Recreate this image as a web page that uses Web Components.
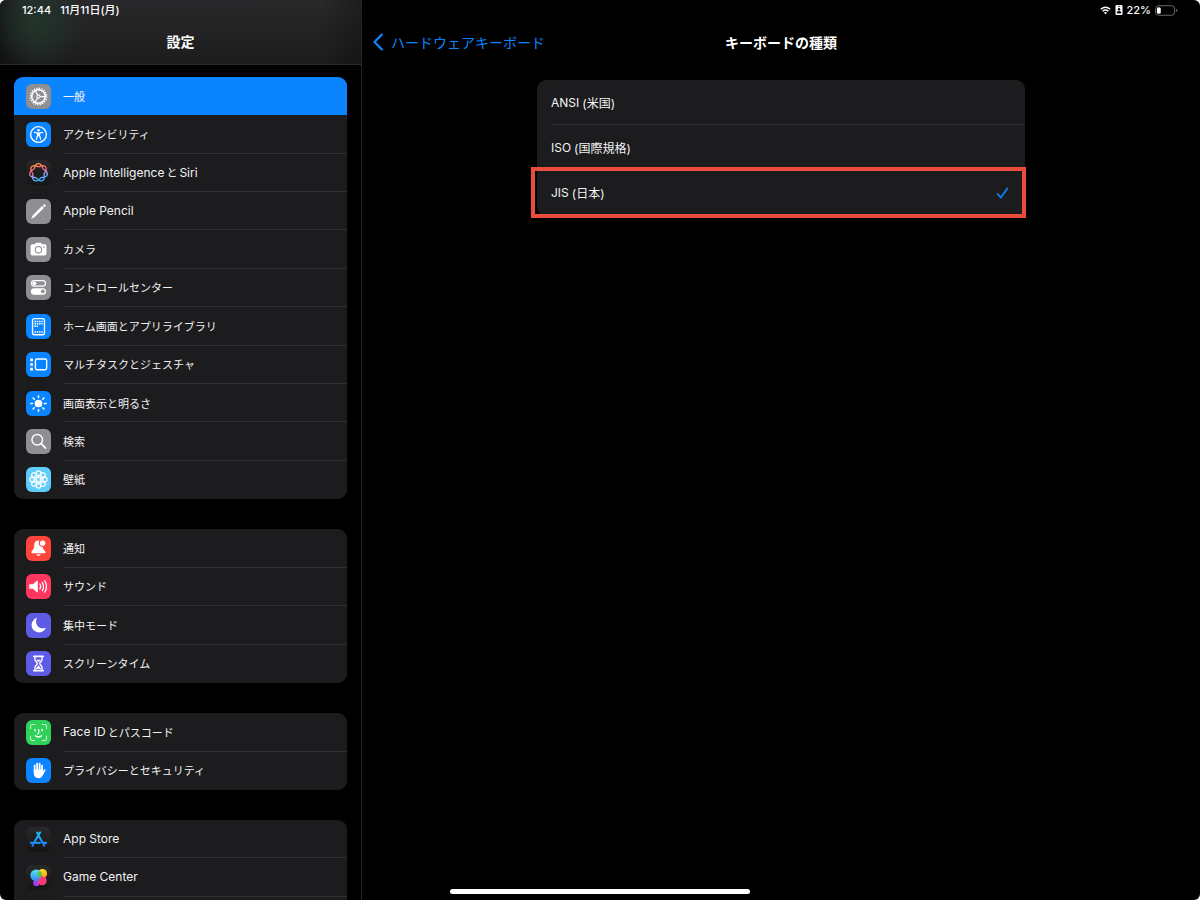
<!DOCTYPE html>
<html lang="ja">
<head>
<meta charset="utf-8">
<meta name="viewport" content="width=device-width, initial-scale=1">
<title>キーボードの種類</title>
<style>
  html {
    background: #fff;
  }

  body {
    margin: 0;
    color: #fff;
    font-family: Inter, "Noto Sans CJK JP", sans-serif;
    font-size: 12px;
  }
</style>
</head>
<body>
<settings-app>
  <settings-sidebar slot="sidebar">
    <settings-group>
      <settings-row icon="general" selected>一般</settings-row>
      <settings-row icon="accessibility">アクセシビリティ</settings-row>
      <settings-row icon="intelligence"><b>Apple Intelligence</b>と<b>Siri</b></settings-row>
      <settings-row icon="pencil"><b>Apple Pencil</b></settings-row>
      <settings-row icon="camera">カメラ</settings-row>
      <settings-row icon="control">コントロールセンター</settings-row>
      <settings-row icon="home">ホーム画面とアプリライブラリ</settings-row>
      <settings-row icon="multitask">マルチタスクとジェスチャ</settings-row>
      <settings-row icon="display">画面表示と明るさ</settings-row>
      <settings-row icon="search">検索</settings-row>
      <settings-row icon="wallpaper">壁紙</settings-row>
    </settings-group>
    <settings-group>
      <settings-row icon="notice">通知</settings-row>
      <settings-row icon="sound">サウンド</settings-row>
      <settings-row icon="focus">集中モード</settings-row>
      <settings-row icon="screentime">スクリーンタイム</settings-row>
    </settings-group>
    <settings-group>
      <settings-row icon="faceid"><b>Face ID</b>とパスコード</settings-row>
      <settings-row icon="privacy">プライバシーとセキュリティ</settings-row>
    </settings-group>
    <settings-group>
      <settings-row icon="appstore"><b>App Store</b></settings-row>
      <settings-row icon="gamecenter"><b>Game Center</b></settings-row>
      <settings-row></settings-row>
    </settings-group>
  </settings-sidebar>
  <settings-detail slot="detail">
    <keyboard-types></keyboard-types>
  </settings-detail>
</settings-app>

<script>
// closed curve that crosses itself around a ring
function ringPath(cx, cy, radius, wave) {
  let d = "";
  for (let i = 0; i <= 168; i++) {
    const a = i / 168 * Math.PI * 4;
    const r = radius + wave * Math.cos(3.5 * a);
    d += (i ? "L" : "M") + (cx + r * Math.sin(a)).toFixed(2) + " " + (cy - r * Math.cos(a)).toFixed(2);
  }
  return d + "Z";
}

function around(count, draw) {
  return Array.from({length: count}, (_, i) => `<g transform="rotate(${i * 360 / count} 13 13)">${draw}</g>`).join("");
}

const gray = "#8e8e93";
const blue = "#0a84ff";
const dark = "linear-gradient(#29292b, #151516)";

const icons = {
  general: [gray, `
    <g fill="none" stroke="#fff">
      <circle cx="13" cy="13" r="7" stroke-width="1.6"/>
      <circle cx="13" cy="13" r="8.5" stroke-width="1.5" stroke-dasharray="1.4 1.27"/>
      <circle cx="13" cy="13" r="1.7" stroke-width="1.1"/>
      <path d="M14.7 13H20M12.1 11.5 9.5 7M12.1 14.5 9.5 19" stroke-width="1.3"/>
    </g>`],
  accessibility: [blue, `
    <circle cx="13" cy="13" r="8.2" fill="none" stroke="#fff" stroke-width="1.4"/>
    <circle cx="13" cy="8.5" r="1.3" fill="#fff"/>
    <path d="M8.7 10.8 12 11.5V14L10.7 18M17.3 10.8 14 11.5V14L15.3 18M12 11.6H14M12.3 14H13.7" fill="none" stroke="#fff" stroke-width="1.3" stroke-linecap="round" stroke-linejoin="round"/>
    <path d="M11.8 11.2H14.2V14.8H11.8Z" fill="#fff"/>`],
  intelligence: [dark, `
    <defs><linearGradient id="ai" x1="0.2" y1="0" x2="0.5" y2="1">
      <stop offset="0" stop-color="#ff9f2e"/><stop offset="0.45" stop-color="#f5608f"/>
      <stop offset="0.7" stop-color="#a9a0f5"/><stop offset="1" stop-color="#28b4ff"/>
    </linearGradient></defs>
    <path d="${ringPath(13, 13, 7.7, 1.6)}" fill="none" stroke="url(#ai)" stroke-width="1.4"/>`],
  pencil: [gray, `
    <path d="M5.4 20.6 6.9 17.2 16.7 7.4 18.6 9.3 8.8 19.1ZM17.4 6.7 18.2 5.9A1.2 1.2 0 0 1 20.1 7.8L19.3 8.6Z" fill="#fff"/>`],
  camera: [gray, `
    <path d="M6.5 7.5H9.3L10.4 6H15.6L16.7 7.5H19.5A1.8 1.8 0 0 1 21.3 9.3V17.4A1.8 1.8 0 0 1 19.5 19.2H6.5A1.8 1.8 0 0 1 4.7 17.4V9.3A1.8 1.8 0 0 1 6.5 7.5Z" fill="#fff"/>
    <circle cx="13" cy="13.2" r="3.3" fill="none" stroke="${gray}" stroke-width="1.1"/>
    <circle cx="18.5" cy="10.4" r=".8" fill="${gray}"/>`],
  control: [gray, `
    <rect x="5.7" y="5.8" width="14.6" height="5.8" rx="2.9" fill="none" stroke="#fff" stroke-width="1.2"/>
    <circle cx="8.7" cy="8.7" r="2" fill="#fff"/>
    <rect x="5.1" y="13.7" width="15.8" height="6.8" rx="3.4" fill="#fff"/>
    <circle cx="17.5" cy="17.1" r="1.9" fill="${gray}"/>`],
  home: [blue, `
    <rect x="6.8" y="4.8" width="12.4" height="16.8" rx="2" fill="none" stroke="#fff" stroke-width="1.4"/>
    <g fill="none" stroke="#fff" stroke-width="1.6" stroke-dasharray="1.6 .8">
      <path d="M8.8 7.8H17.4M8.8 10.2H17.4M8.8 12.6H12.4M8.8 18.8H17.4"/>
    </g>`],
  multitask: [blue, `
    <rect x="9.8" y="7.3" width="11.7" height="11.2" rx="1.8" fill="none" stroke="#fff" stroke-width="1.4"/>
    <path d="M4.4 6.8H7.2V9.6H4.4ZM4.4 11.6H7.2V14.4H4.4ZM4.4 16.4H7.2V19.2H4.4Z" fill="#fff"/>`],
  display: [blue, `
    <circle cx="13" cy="13" r="4" fill="#fff"/>
    ${around(8, '<path d="M13 5V6.8" stroke="#fff" stroke-width="1.6" stroke-linecap="round"/>')}`],
  search: [gray, `
    <circle cx="11.7" cy="11.2" r="5.5" fill="none" stroke="#fff" stroke-width="1.5"/>
    <path d="M15.8 15.3 20.3 19.8" stroke="#fff" stroke-width="1.8" stroke-linecap="round"/>`],
  wallpaper: ["#5fcdfb", `
    <g fill="none" stroke="#fff" stroke-width="1.2">
      ${around(8, '<circle cx="13" cy="6.4" r="2.4"/><path d="M13 8.8V10.4"/>')}
      <circle cx="13" cy="13" r="2.6"/>
    </g>
    <circle cx="13" cy="13" r="6.4" fill="#fff" opacity=".25"/>`],
  notice: ["#ff453a", `
    <path d="M12.8 4.8C9.6 5 8.6 7.2 8.6 10.2 8.6 14 5.6 15.2 5.6 17.2 5.6 17.8 6 18 6.6 18H19.4C20 18 20.4 17.8 20.4 17.2 20.4 15.2 17.6 14.4 17.4 11.4 14.6 11.4 12.2 8.4 13.8 4.9Z" fill="#fff"/>
    <path d="M10.8 19H15.2C14.8 21.4 11.2 21.4 10.8 19Z" fill="#fff"/>
    <circle cx="17.3" cy="7.6" r="2.8" fill="#fff"/>`],
  sound: ["#ff375f", `
    <path d="M4 10.6H7.2L11.4 7Q12.3 6.5 12.3 7.5V18.5Q12.3 19.5 11.4 19L7.2 15.4H4Q3.4 15.4 3.4 14.8V11.2Q3.4 10.6 4 10.6Z" fill="#fff"/>
    <path d="M14.5 10.4Q16 13 14.5 15.6M17 8.7Q19.5 13 17 17.3M19.5 7Q23 13 19.5 19" fill="none" stroke="#fff" stroke-width="1.3" stroke-linecap="round"/>`],
  focus: ["#5e5ce6", `
    <path d="M11.2 5.4C8.6 11 13 17.5 19.8 15.6 20.3 15.5 20.6 15.8 20.3 16.3 17.3 21.5 9.4 21.4 6.7 16.2 4.6 12 6.6 7.2 10.5 5.1 11 4.9 11.4 5 11.2 5.4Z" fill="#fff"/>`],
  screentime: ["#5e5ce6", `
    <path d="M8.2 5.5H17.8M8.2 20.5H17.8" stroke="#fff" stroke-width="1.8" stroke-linecap="round"/>
    <path d="M9.3 6V8.5C9.3 11 11.8 11.5 11.8 13S9.3 15 9.3 17.5V20M16.7 6V8.5C16.7 11 14.2 11.5 14.2 13S16.7 15 16.7 17.5V20" fill="none" stroke="#fff" stroke-width="1.4"/>
    <path d="M10.4 9H15.6L13 11.8ZM13 14.8 16 18.8H10Z" fill="#fff"/>`],
  faceid: ["#30d158", `
    <g fill="none" stroke="#fff" stroke-linecap="round">
      <path d="M4.7 9V6.7A2 2 0 0 1 6.7 4.7H9M17 4.7H19.3A2 2 0 0 1 21.3 6.7V9M21.3 17V19.3A2 2 0 0 1 19.3 21.3H17M9 21.3H6.7A2 2 0 0 1 4.7 19.3V17" stroke-width="1.1" opacity=".75"/>
      <path d="M9.3 9.8V11.2M16.7 9.8V11.2M13.2 10V13.6Q13.2 14.3 12.3 14.3M9.8 16.4Q13 19 16.2 16.4" stroke-width="1.4"/>
    </g>`],
  privacy: [blue, `
    <g fill="none" stroke="#fff" stroke-width="1.9" stroke-linecap="round">
      <path d="M9 7.8V14M11.6 5.8V14M14.2 6V14M16.7 8V15M19.4 12.6 17 17"/>
    </g>
    <path d="M8.1 12H17.6L18.2 16.4C16.8 19.8 15.4 21 13 21 9.8 21 8.1 18.8 8.1 15.4Z" fill="#fff"/>`],
  appstore: [dark, `
    <defs><linearGradient id="as" gradientUnits="userSpaceOnUse" x1="0" y1="5" x2="0" y2="21">
      <stop offset="0" stop-color="#1dc3fb"/><stop offset="1" stop-color="#1d74f2"/>
    </linearGradient></defs>
    <path d="M11.6 5.7 13 8.1M14.6 5.7 8.3 16.4M13.3 9.4 19.1 19.4M5 16.5H14.5M17.7 16.5H21M7.5 18.4 6.8 19.6" fill="none" stroke="url(#as)" stroke-width="2.1" stroke-linecap="round"/>`],
  gamecenter: [dark, `
    <defs>
      <linearGradient id="g1" x1="0" y1="0" x2="0" y2="1"><stop offset="0" stop-color="#5ce0ee"/><stop offset="1" stop-color="#2f86f7"/></linearGradient>
      <linearGradient id="g2" x1="0" y1="0" x2="0" y2="1"><stop offset="0" stop-color="#ffe11f"/><stop offset="1" stop-color="#ff9d0c"/></linearGradient>
    </defs>
    <circle cx="10.8" cy="18.6" r="3.3" fill="#a63cf2"/>
    <circle cx="17" cy="9" r="4.9" fill="url(#g2)"/>
    <circle cx="10.5" cy="10.8" r="6" fill="url(#g1)"/>
    <path d="M12.4 7.5A4.9 4.9 0 0 0 15.8 13.7 6 6 0 0 0 14.5 6.3Z" fill="#58c83a"/>
    <circle cx="16.8" cy="16.4" r="4.7" fill="#fb3a77"/>
    <path d="M12.4 16.4A4.7 4.7 0 0 1 16 11.8 6 6 0 0 1 12.4 16.4Z" fill="#8b70e0"/>`]
};

class SettingsApp extends HTMLElement {
  constructor() {
    super();
    this.attachShadow({mode: "open"}).innerHTML = `
      <style>
        :host {
          display: grid;
          grid-template-columns: 362px 1fr;
          height: 100vh;
          overflow: hidden;
          position: relative;
          background: #000;
          border-radius: 6px;
        }

        .home-bar {
          position: absolute;
          bottom: 6px;
          left: 0;
          right: 0;
          width: 25%;
          height: 5px;
          margin: 0 auto;
          border-radius: 3px;
          background: #fff;
        }
      </style>
      <slot name="sidebar"></slot>
      <slot name="detail"></slot>
      <div class="home-bar"></div>`;
  }
}

class SettingsSidebar extends HTMLElement {
  constructor() {
    super();
    this.attachShadow({mode: "open"}).innerHTML = `
      <style>
        :host {
          display: flex;
          flex-direction: column;
          min-height: 0;
          overflow: hidden;
          border-right: 1px solid #262628;
        }

        header {
          flex: none;
          background:
            radial-gradient(circle at 38px 22px, #20352a, transparent 48px),
            linear-gradient(90deg, #0006, transparent 30px, transparent 320px, #0004),
            linear-gradient(#29292b, #1c1c1d);
          border-bottom: 1px solid #2a2a2c;
        }

        .status {
          display: flex;
          gap: 9px;
          padding: 0 22px;
          font-size: 11px;
          font-weight: 500;
          line-height: 20px;
        }

        h1 {
          margin: 0;
          font-size: 14px;
          line-height: 44px;
          text-align: center;
        }

        nav {
          display: flex;
          flex-direction: column;
          gap: 30px;
          padding: 12px 14px 0;
        }
      </style>
      <header>
        <div class="status"><span>12:44</span><span>11月11日(月)</span></div>
        <h1>設定</h1>
      </header>
      <nav aria-label="設定"><slot></slot></nav>`;
  }
}

class SettingsGroup extends HTMLElement {
  constructor() {
    super();
    this.attachShadow({mode: "open"}).innerHTML = `
      <style>
        :host {
          display: grid;
          grid-auto-rows: 1fr;
          flex: none;
          overflow: hidden;
          border-radius: 9px;
          background: #1c1c1e;
        }

        :host(:first-child) {
          min-height: 422px;
        }

        :host(:nth-child(2)) {
          min-height: 154px;
        }

        :host(:nth-child(3)) {
          min-height: 77px;
        }

        :host(:last-child) {
          min-height: 115px;
        }
      </style>
      <slot></slot>`;
  }
}

class AppIcon extends HTMLElement {
  connectedCallback() {
    const [color, art] = icons[this.getAttribute("name")];
    this.attachShadow({mode: "open"}).innerHTML = `
      <style>
        :host {
          display: block;
          flex: none;
          width: 25px;
          height: 25px;
          border-radius: 6px;
          background: ${color};
        }

        svg {
          display: block;
        }
      </style>
      <svg width="25" height="25" viewBox="0 0 26 26" aria-hidden="true">${art}</svg>`;
  }
}

class SettingsRow extends HTMLElement {
  connectedCallback() {
    const icon = this.getAttribute("icon");
    this.attachShadow({mode: "open"}).innerHTML = `
      <style>
        :host {
          display: grid;
          min-height: 38px;
        }

        :host([selected]) {
          background: #0a84ff;
        }

        a {
          display: flex;
          align-items: center;
          gap: 12px;
          padding-left: 12px;
          color: #f2f2f3;
          text-decoration: none;
        }

        .label {
          flex: 1;
          align-self: stretch;
          display: flex;
          align-items: center;
          gap: 2px;
          box-sizing: border-box;
          border-bottom: 1px solid #303032;
          font-size: 11px;
        }

        :host(:last-child) .label,
        :host([selected]) .label {
          border-color: transparent;
        }

        ::slotted(b) {
          font-size: 12px;
          font-weight: 400;
        }
      </style>
      ${icon ? `<a href="#${icon}"><app-icon name="${icon}"></app-icon><span class="label"><slot></slot></span></a>` : ""}`;
  }
}

class SettingsDetail extends HTMLElement {
  constructor() {
    super();
    this.attachShadow({mode: "open"}).innerHTML = `
      <style>
        :host {
          display: block;
          min-width: 0;
        }

        .status {
          display: flex;
          justify-content: flex-end;
          align-items: center;
          gap: 4px;
          height: 20px;
          padding-right: 22px;
          font-size: 11px;
          font-weight: 500;
        }

        header {
          display: grid;
          grid-template-columns: 1fr auto 1fr;
          align-items: center;
          height: 44px;
          padding: 0 11px;
        }

        a {
          display: flex;
          align-items: center;
          gap: 8px;
          color: #0a84ff;
          font-size: 14px;
          text-decoration: none;
        }

        h2 {
          margin: 0;
          font-size: 14px;
        }

        main {
          padding: 16px 20px 0;
        }
      </style>
      <div class="status">
        <svg width="11" height="9" viewBox="0 0 12 10" fill="none" stroke="#fff" stroke-width="1.6" aria-hidden="true">
          <path d="M.8 3.6Q6-.9 11.2 3.6M2.8 5.8Q6 3 9.2 5.8"/>
          <path d="M6 9.4 4.2 7.3Q6 5.9 7.8 7.3Z" fill="#fff" stroke="none"/>
        </svg>
        <svg width="8" height="10" viewBox="0 0 8 10" aria-hidden="true">
          <rect x=".5" width="7" height="10" rx="1.2" fill="#fff"/>
          <path d="M2.8 1.4H5.2M2 8Q2 6.2 4 6.2T6 8Z" fill="#000" stroke="#000" stroke-width=".7"/>
          <circle cx="4" cy="4.2" r="1.2" fill="#000"/>
        </svg>
        <span>22%</span>
        <svg width="23" height="11" viewBox="0 0 24 11" aria-hidden="true">
          <rect x=".5" y=".5" width="20" height="10" rx="3.4" fill="none" stroke="#6c6c6e"/>
          <path d="M22 4V7Q23.4 6.6 23.4 5.5T22 4Z" fill="#6c6c6e"/>
          <rect x="2" y="2" width="4" height="7" rx="1.8" fill="#fff"/>
        </svg>
      </div>
      <header>
        <a href="#hardware-keyboard">
          <svg width="10" height="18" viewBox="0 0 10 18" aria-hidden="true">
            <path d="M8.8 1.6 1.4 9 8.8 16.4" fill="none" stroke="#0a84ff" stroke-width="2.2" stroke-linecap="round" stroke-linejoin="round"/>
          </svg>
          <span>ハードウェアキーボード</span>
        </a>
        <h2>キーボードの種類</h2>
      </header>
      <main><slot></slot></main>`;
  }
}

class KeyboardTypes extends HTMLElement {
  constructor() {
    super();
    this.attachShadow({mode: "open"});
  }

  connectedCallback() {
    this.render();
  }

  render() {
    const types = [["ANSI", "米国"], ["ISO", "国際規格"], ["JIS", "日本"]];
    this.shadowRoot.innerHTML = `
      <style>
        :host {
          display: grid;
          grid-auto-rows: 1fr;
          min-height: 136px;
          max-width: 488px;
          margin: 0 auto;
          border-radius: 9px;
          background: #1c1c1e;
        }

        label {
          display: flex;
          position: relative;
          padding-left: 14px;
          color: #f2f2f3;
        }

        .line {
          flex: 1;
          display: flex;
          align-items: center;
          gap: 3px;
          box-sizing: border-box;
          padding-right: 16px;
          border-bottom: 1px solid #303032;
        }

        label:last-child .line {
          border-color: transparent;
        }

        .place {
          flex: 1;
        }

        input {
          appearance: none;
          margin: 0;
          position: absolute;
          inset: 0;
          outline: 0;
        }

        svg {
          visibility: hidden;
        }

        input:checked ~ .line svg {
          visibility: visible;
        }

        /* red frame round the chosen type */
        input:checked {
          inset: -4px -1px -2px -6px;
          border: 4px solid #eb4d3d;
        }
      </style>
      ${types.map(([name, place]) => `
        <label>
          <input type="radio" name="type" value="${name}" ${name === "JIS" ? "checked" : ""}>
          <span class="line">
            <span>${name}</span><span class="place">(${place})</span>
            <svg width="13" height="12" viewBox="0 0 13 12" aria-hidden="true">
              <path d="M1.5 6.8 4.9 10.6 11.3 1.4" fill="none" stroke="#0a84ff" stroke-width="1.7" stroke-linecap="round" stroke-linejoin="round"/>
            </svg>
          </span>
        </label>`).join("")}`;
  }
}

customElements.define("app-icon", AppIcon);
customElements.define("settings-row", SettingsRow);
customElements.define("settings-group", SettingsGroup);
customElements.define("settings-sidebar", SettingsSidebar);
customElements.define("keyboard-types", KeyboardTypes);
customElements.define("settings-detail", SettingsDetail);
customElements.define("settings-app", SettingsApp);
</script>
</body>
</html>
